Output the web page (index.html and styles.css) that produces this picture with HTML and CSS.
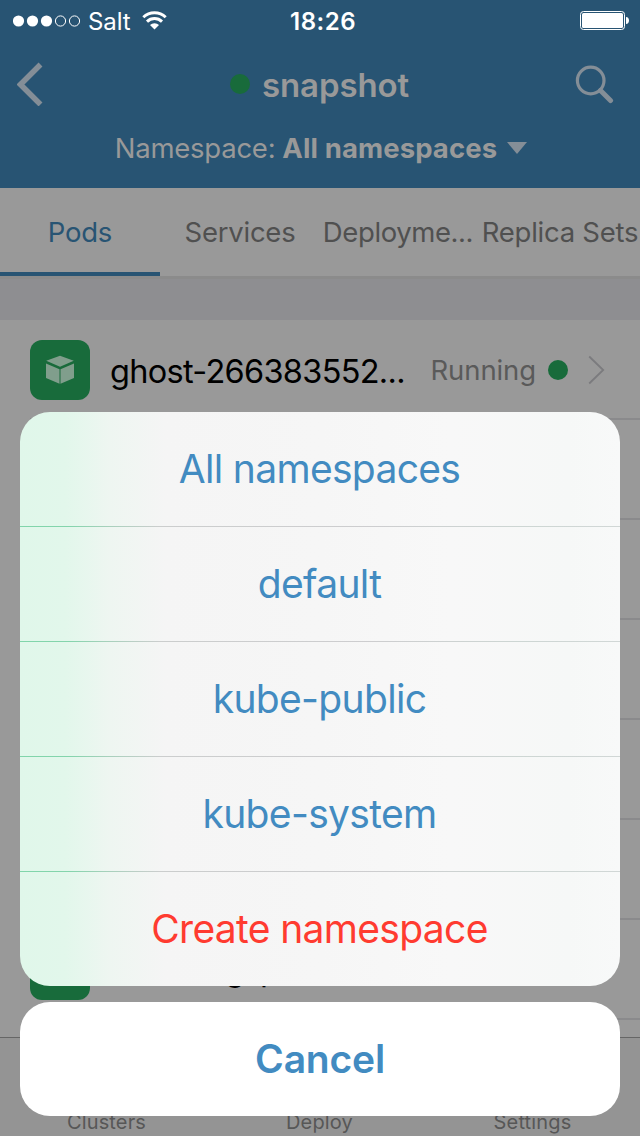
FILE: index.html
```
<!DOCTYPE html>
<html lang="en">
<head>
<meta charset="utf-8">
<title>Pods</title>
<link rel="stylesheet" href="styles.css">
</head>
<body>
<div class="screen">
  <header class="header">
    <div class="status">
      <div class="carrier">
        <svg width="68" height="12" viewBox="0 0 68 12"><g fill="#fff"><circle cx="5.500" cy="6" r="5.600"/><circle cx="19.500" cy="6" r="5.600"/><circle cx="33.500" cy="6" r="5.600"/></g><g fill="none" stroke="#fff"><circle cx="47.500" cy="6" r="5.100"/><circle cx="61.500" cy="6" r="5.100"/></g></svg>
        <span class="salt">Salt</span>
        <svg class="wifi" width="25" height="19" viewBox="0 0 25 19"><g fill="none" stroke="#fff" stroke-width="2.900"><path d="M1.300 6.300a16 16 0 0 1 22.400 0"/><path d="M5 10.600a10.700 10.700 0 0 1 15 0"/></g><path d="M8 14a6.500 6.500 0 0 1 9 0l-4.500 4.600z" fill="#fff"/></svg>
      </div>
      <span class="time">18:26</span>
      <svg class="battery" width="49" height="20" viewBox="0 0 49 20"><rect x=".5" y=".5" width="44" height="18" rx="3" fill="none" stroke="#fff"/><rect x="2" y="2" width="41" height="15" rx="1.500" fill="#fff"/><path d="M46 6c4 0 4 7 0 7z" fill="#fff"/></svg>
    </div>
    <div class="nav">
      <svg width="26" height="44" viewBox="0 0 26 44"><path d="M23.500 2.500 3.500 22.500l20 20" fill="none" stroke="#848e97" stroke-width="5.500"/></svg>
      <div class="title"><i class="dot"></i><span>snapshot</span></div>
      <svg width="40" height="40" viewBox="0 0 40 40"><circle cx="16.700" cy="16.500" r="13.300" fill="none" stroke="#848e97" stroke-width="3.200"/><path d="m26.500 26.500 10 10" stroke="#848e97" stroke-width="5" stroke-linecap="round"/></svg>
    </div>
    <div class="namespace"><span class="ns-label">Namespace:</span><span class="ns-value">All namespaces</span><svg width="20" height="12" viewBox="0 0 20 12"><path d="M0 0h20L10 12z" fill="#848e97"/></svg></div>
  </header>
  <nav class="tabs">
    <div class="tab active">Pods</div>
    <div class="tab">Services</div>
    <div class="tab tab-long">Deployme...</div>
    <div class="tab">Replica Sets</div>
  </nav>
  <div class="gap"></div>
  <main class="list">
    <div class="row">
      <div class="badge"><svg width="30" height="30" viewBox="0 0 30 30" fill="#809e8c"><path d="M1.200 5.800 15 .8l13.800 5L15 11.800zM1 8.600l13.500 5.600v14.600L1 23zM29 8.600l-13.500 5.600v14.600L29 23z"/></svg></div>
      <span class="name">ghost-266383552...</span>
      <span class="state">Running</span>
      <i class="dot"></i>
      <svg class="chevron" width="18" height="30" viewBox="0 0 18 30"><path d="m1.200 1.500 14 13.500-14 13.500" fill="none" stroke="#7b7b7e" stroke-width="1.800"/></svg>
    </div>
    <div class="row"></div>
    <div class="row"></div>
    <div class="row"></div>
    <div class="row"></div>
    <div class="row"></div>
    <div class="row"><div class="badge"></div><span class="name partial">g-p</span></div>
  </main>
  <footer class="tabbar"><span>Clusters</span><span>Deploy</span><span>Settings</span></footer>
  <div class="sheet">
    <div class="actions">
      <div class="action">All namespaces</div>
      <div class="action">default</div>
      <div class="action">kube-public</div>
      <div class="action">kube-system</div>
      <div class="action danger">Create namespace</div>
    </div>
    <div class="cancel">Cancel</div>
  </div>
</div>
</body>
</html>
```
FILE: styles.css
```
* { box-sizing: border-box; }
body { margin: 0; font-family: Inter, "Liberation Sans", sans-serif; }
svg { display: block; flex: none; }
.screen { position: relative; width: 640px; height: 1136px; overflow: hidden; background: #999; display: flex; flex-direction: column; white-space: nowrap; }
.header { height: 188px; flex: none; background: #285473; color: #999; }
.status { height: 40px; padding: 2px 11px 0 13px; display: grid; grid-template-columns: 1fr auto 1fr; align-items: center; color: #fff; font-size: 24px; }
.carrier { display: flex; align-items: center; gap: 7px; }
.salt { letter-spacing: -.1px; }
.wifi { margin-left: 4px; margin-top: -2px; }
.time { font-weight: 600; letter-spacing: .5px; padding-left: 4px; }
.battery { justify-self: end; }
.nav { height: 88px; padding: 0 26px 0 17px; display: flex; align-items: center; justify-content: space-between; }
.title { display: flex; align-items: center; gap: 12px; margin-left: 22px; font-size: 33px; font-weight: 600; letter-spacing: -.1px; }
.title span { padding-top: 2px; }
.dot { width: 20px; height: 20px; border-radius: 50%; background: #186b3b; flex: none; }
.namespace { height: 40px; padding-left: 2px; display: flex; align-items: center; justify-content: center; font-size: 27.5px; }
.ns-label { letter-spacing: -.25px; }
.ns-value { font-weight: 700; margin: 0 10px 0 7px; letter-spacing: .1px; }
.tabs { height: 88px; flex: none; display: grid; grid-template-columns: repeat(4, 160px); color: #505050; font-size: 27.5px; letter-spacing: -.25px; }
.tab { display: flex; align-items: center; justify-content: center; }
.tab-long { letter-spacing: -.4px; padding-right: 4px; }
.active { color: #285473; border-bottom: 4px solid #285473; padding-top: 4px; }
.gap { height: 44px; flex: none; background: #8e8e91; border-top: 3px solid #8b8b8b; }
.list { height: 717px; flex: none; overflow: hidden; padding-left: 30px; }
.row { height: 100px; padding: 2px 34px 0 0; display: flex; align-items: center; border-bottom: 2px solid #8a8a8c; }
.badge { width: 60px; height: 60px; border-radius: 12px; background: #186b3b; display: flex; align-items: center; justify-content: center; flex: none; }
.name { font-size: 32.500px; color: #000; margin-left: 20px; letter-spacing: -.7px; padding-top: 2px; }
.partial { margin-left: 135px; padding: 0 0 2px; letter-spacing: 0; }
.state { font-size: 27.5px; color: #5a5a5a; margin-left: auto; margin-right: 12px; letter-spacing: -.1px; }
.chevron { margin-left: 20px; }
.tabbar { height: 99px; flex: none; border-top: 1px solid #666; background: #949494; display: grid; grid-template-columns: repeat(3, 1fr); text-align: center; align-items: end; font-size: 20px; letter-spacing: .15px; padding: 0 1px 2px 0; color: #575757; }
.sheet { position: absolute; left: 20px; right: 20px; top: 412px; display: flex; flex-direction: column; gap: 16px; font-size: 39px; color: #428bc1; }
.actions { height: 574px; border-radius: 30px; overflow: hidden; background: linear-gradient(90deg, #e0f7ea 0, #e2f7eb 45px, #eef6f1 90px, #f5f5f5 145px, #f6f6f6 300px, #f8f8f8 430px, #f6f8f7 550px, #f8f9f9 600px); display: grid; grid-template-rows: repeat(4, 115px) 114px; }
.action { display: flex; align-items: center; justify-content: center; letter-spacing: -.67px; padding: 0 1px 1px 0; border-bottom: 1px solid; border-image: linear-gradient(90deg, #80d5aa 0, #84d4ac 50px, #a8d0bc 90px, #cbcdcd 140px, #cdcdcf 350px, #cdd6d3 500px, #d1d7d6 600px) 1; }
.danger { color: #ff3b30; border: 0; }
.cancel { height: 114px; border-radius: 30px; background: #fff; display: flex; align-items: center; justify-content: center; font-weight: 600; letter-spacing: -.2px; padding-bottom: 2px; }
```
